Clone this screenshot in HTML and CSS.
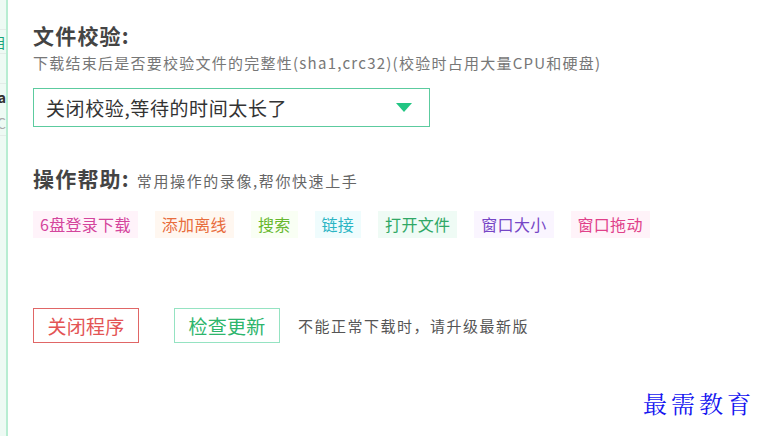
FILE: index.html
```html
<!DOCTYPE html>
<html lang="zh-CN">
<head>
<meta charset="utf-8">
<title>设置</title>
<link rel="stylesheet" href="styles.css">
</head>
<body>
<div class="app">
  <aside class="side">
    <div class="side-row"></div>
    <div class="side-row link">项目</div>
    <div class="side-row"></div>
    <div class="side-row dark">Data</div>
    <div class="side-row grey">(C</div>
  </aside>
  <main class="main">
    <section class="block">
      <h2 class="title">文件校验:</h2>
      <p class="desc">下载结束后是否要校验文件的完整性(sha1,crc32)(校验时占用大量CPU和硬盘)</p>
      <div class="select">
        <span class="select-text">关闭校验,等待的时间太长了</span>
        <span class="caret"></span>
      </div>
    </section>
    <section class="block help">
      <div class="help-head">
        <h2 class="title">操作帮助:</h2>
        <span class="help-desc">常用操作的录像,帮你快速上手</span>
      </div>
      <div class="tags">
        <span class="tag t1">6盘登录下载</span>
        <span class="tag t2">添加离线</span>
        <span class="tag t3">搜索</span>
        <span class="tag t4">链接</span>
        <span class="tag t5">打开文件</span>
        <span class="tag t6">窗口大小</span>
        <span class="tag t7">窗口拖动</span>
      </div>
    </section>
    <section class="actions">
      <button class="btn btn-red">关闭程序</button>
      <button class="btn btn-green">检查更新</button>
      <span class="note">不能正常下载时，请升级最新版</span>
    </section>
    <div class="watermark">最需教育</div>
  </main>
</div>
</body>
</html>
```
FILE: styles.css
```css
* { box-sizing: border-box; }
html, body { margin: 0; padding: 0; background: #fff; }
body {
  font-family: "Noto Sans CJK SC", "Noto Sans", sans-serif;
  color: #444;
  width: 763px;
  height: 436px;
  overflow: hidden;
}
.app { display: flex; height: 436px; }
.side {
  width: 8px;
  flex: none;
  background: #eefaf4;
  border-right: 2px solid #b8edd2;
  overflow: hidden;
  display: flex;
  flex-direction: column;
}
.side-row {
  height: 30px;
  display: flex;
  justify-content: flex-end;
  align-items: center;
  white-space: nowrap;
  font-size: 14px;
  border-bottom: 1px solid #e3ece8;
}
.side-row.link { color: #1aa57a; height: 24px; }
.side-row.dark { color: #333; font-weight: bold; height: 26px; border-bottom: none; }
.side-row.grey { color: #aaa; height: 26px; }
.main {
  flex: 1;
  padding: 21px 0 0 25px;
  display: flex;
  flex-direction: column;
  position: relative;
}
.title {
  margin: 0;
  font-size: 21px;
  font-weight: bold;
  color: #444;
  line-height: 28px;
  letter-spacing: 1.2px;
}
.desc {
  margin: 4px 0 0;
  font-size: 15px;
  color: #777;
  line-height: 20px;
  letter-spacing: 1.25px;
}
.select {
  margin-top: 15px;
  width: 397px;
  height: 39px;
  border: 1px solid #5ccb9f;
  display: flex;
  align-items: center;
  justify-content: space-between;
  padding: 0 17px 0 12px;
}
.select-text { font-size: 19px; color: #333; letter-spacing: 0.6px; }
.caret {
  width: 0; height: 0;
  border-left: 8px solid transparent;
  border-right: 8px solid transparent;
  border-top: 9px solid #22c583;
}
.help { margin-top: 37px; }
.help-head { display: flex; align-items: baseline; gap: 7px; }
.help-desc { font-size: 15px; color: #666; letter-spacing: 1.6px; }
.tags { display: flex; gap: 17px; margin-top: 19px; }
.tag {
  height: 27px;
  line-height: 27px;
  padding: 0 7px;
  font-size: 16px;
  letter-spacing: 0.3px;
}
.t1 { color: #d4449c; background: #fff3fa; }
.t2 { color: #e86d3d; background: #fff7f0; }
.t3 { color: #66b82e; background: #f9fff4; }
.t4 { color: #2bb5c4; background: #effcfd; }
.t5 { color: #30a866; background: #effbf5; }
.t6 { color: #7646c6; background: #faf5ff; }
.t7 { color: #e0418a; background: #fff3f9; }
.actions {
  display: flex;
  align-items: center;
  margin-top: 70px;
}
.btn {
  font-family: inherit;
  background: #fff;
  width: 106px;
  height: 35px;
  font-size: 19px;
  padding: 0;
  letter-spacing: 0.3px;
  cursor: pointer;
}
.btn-red { border: 1px solid #e06666; color: #e35454; }
.btn-green { border: 1px solid #95e3c2; color: #2db56c; margin-left: 35px; }
.note { margin-left: 18px; font-size: 15px; color: #555; letter-spacing: 1.5px; }
.watermark {
  position: absolute;
  right: 8px;
  bottom: 16px;
  font-family: "Noto Serif CJK SC", "Liberation Serif", "Noto Sans CJK SC", serif;
  font-size: 24px;
  color: #1616f0;
  letter-spacing: 4px;
}
```
